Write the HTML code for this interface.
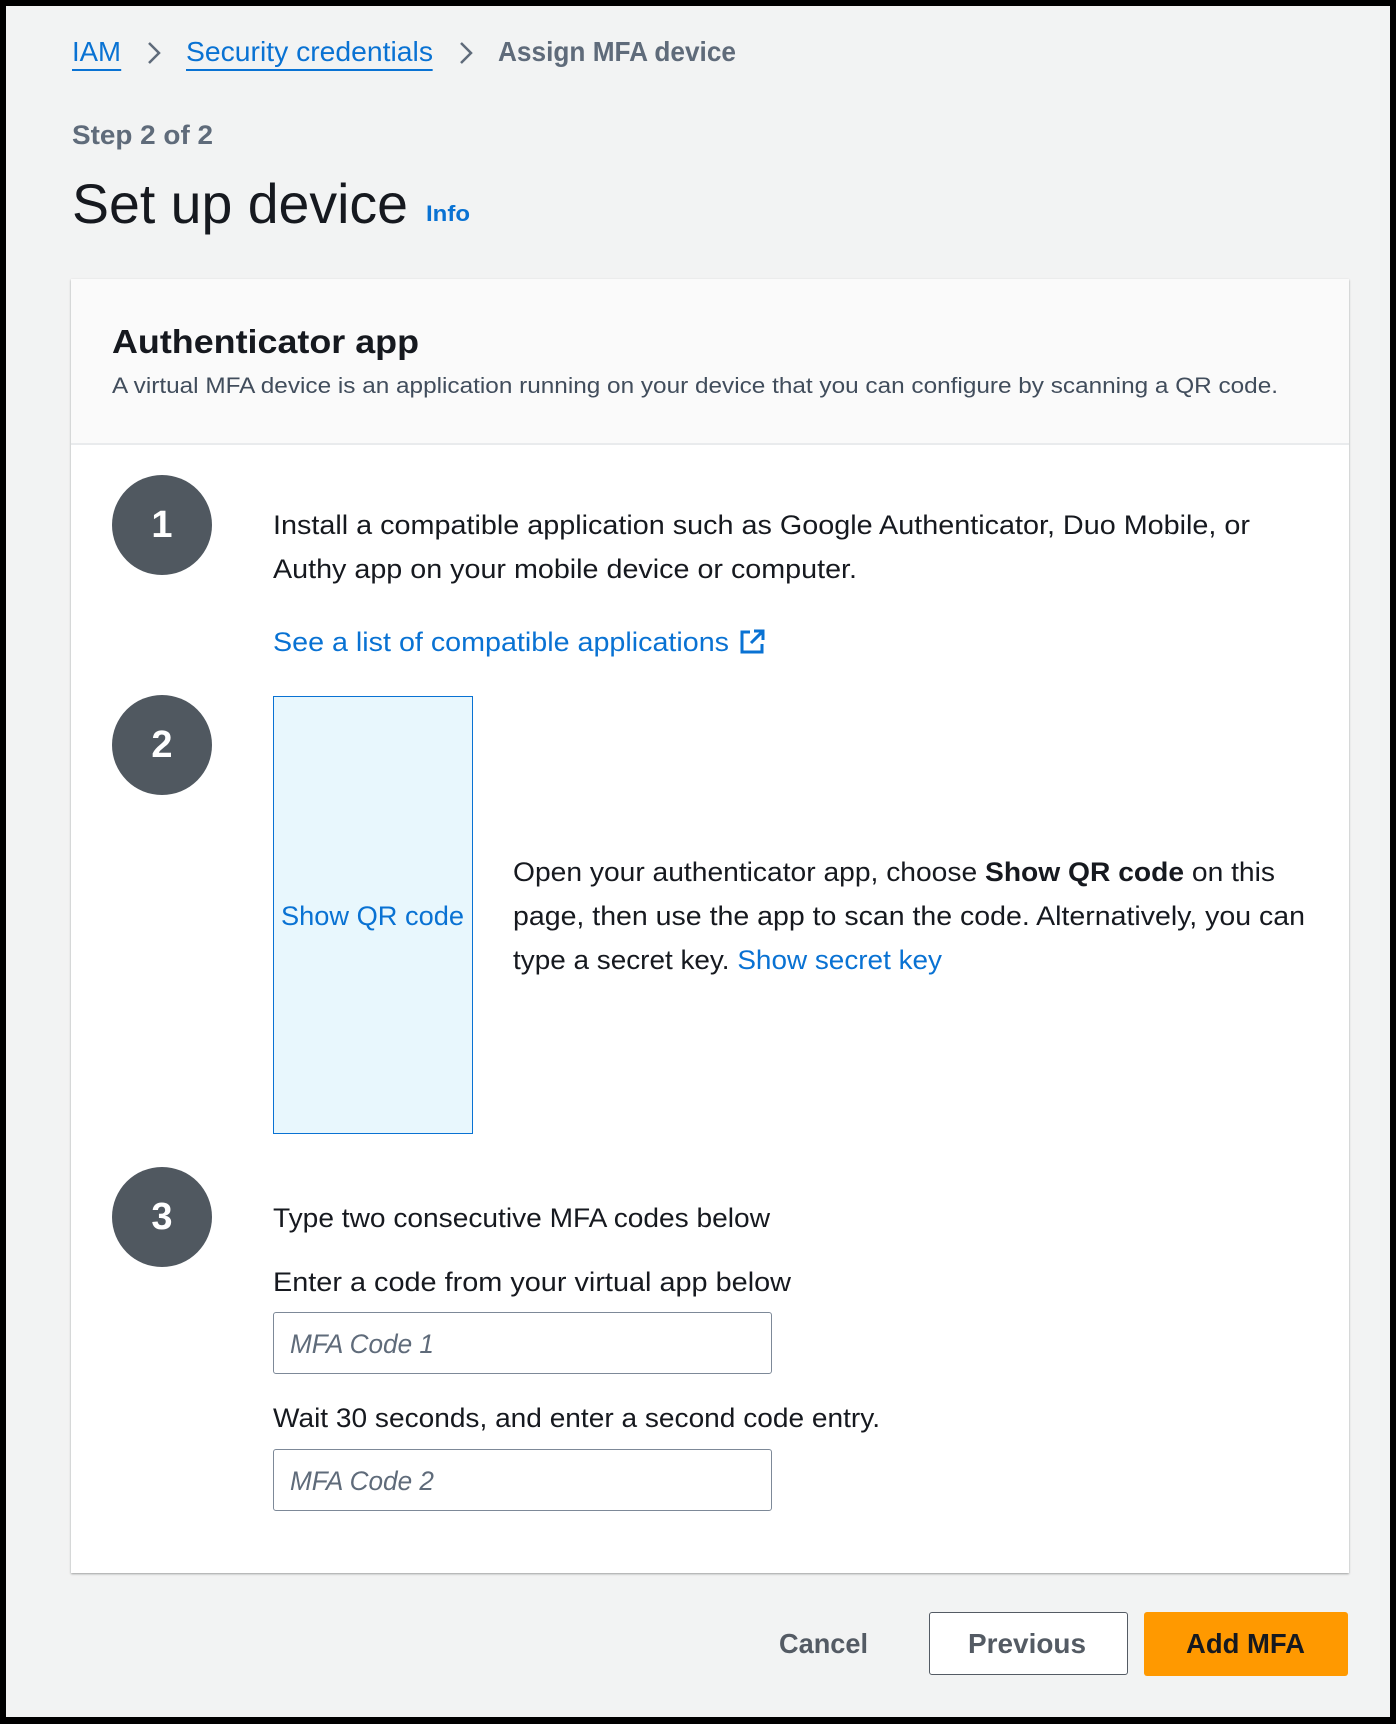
<!DOCTYPE html>
<html><head><meta charset="utf-8"><style>
html,body{margin:0;padding:0}
body{width:1396px;height:1724px;background:#000;position:relative;overflow:hidden;font-family:"Liberation Sans",sans-serif;color:#16191f}
#pg{position:absolute;left:6px;top:6px;width:1384px;height:1711px;background:#f2f3f3}
.t{position:absolute;white-space:nowrap;transform-origin:0 50%;line-height:1}
.a{color:#0972d3}
.card{position:absolute;left:71px;top:279px;width:1278px;height:1293px;background:#fff;box-shadow:0 1px 2px rgba(0,0,0,.35);border-top:1px solid #e9ebed}
.hdr{position:absolute;left:71px;top:279px;width:1278px;height:164px;background:#fafafa;border-bottom:2px solid #e9ebed}
.c{position:absolute;width:100px;height:100px;border-radius:50%;background:#505860;color:#fff;font-weight:bold;font-size:38px;display:flex;align-items:center;justify-content:center}
.in{position:absolute;left:273px;width:497px;height:60px;border:1.5px solid #7d8998;border-radius:3px;background:#fff}
.u{border-bottom:2px solid #0972d3;padding-bottom:2px}
</style></head><body>
<div id="pg"></div>
<div class="t a fit" style="left:72px;top:38px;font-size:28px;--w:49px"><span class="u">IAM</span></div>
<svg style="position:absolute;left:146px;top:40px" width="16" height="26"><path d="M3 3 L13 13 L3 23" stroke="#5f6b7a" stroke-width="2.5" fill="none"/></svg>
<div class="t a fit" style="left:186px;top:38px;font-size:28px;--w:247px"><span class="u">Security credentials</span></div>
<svg style="position:absolute;left:458px;top:40px" width="16" height="26"><path d="M3 3 L13 13 L3 23" stroke="#5f6b7a" stroke-width="2.5" fill="none"/></svg>
<div class="t fit" style="left:498px;top:38px;font-size:28px;color:#5f6b7a;font-weight:bold;--w:238px">Assign MFA device</div>
<div class="t fit" style="left:72px;top:122px;font-size:27px;color:#5f6b7a;font-weight:bold;--w:141px">Step 2 of 2</div>
<div class="t fit" style="left:72px;top:176px;font-size:56px;--w:336px">Set up device</div>
<div class="t a fit" style="left:426px;top:203px;font-size:22px;font-weight:bold;--w:44px">Info</div>
<div class="card"></div>
<div class="hdr"></div>
<div class="t fit" style="left:112px;top:325px;font-size:33px;font-weight:bold;--w:307px">Authenticator app</div>
<div class="t fit" style="left:112px;top:375px;font-size:22px;color:#414d5c;--w:1166px">A virtual MFA device is an application running on your device that you can configure by scanning a QR code.</div>
<div class="c" style="left:112px;top:475px">1</div>
<div class="c" style="left:112px;top:695px">2</div>
<div class="c" style="left:112px;top:1167px">3</div>
<div class="t fit" style="left:273px;top:512px;font-size:27px;--w:977px">Install a compatible application such as Google Authenticator, Duo Mobile, or</div>
<div class="t fit" style="left:273px;top:556px;font-size:27px;--w:584px">Authy app on your mobile device or computer.</div>
<div class="t a fit" style="left:273px;top:629px;font-size:27px;--w:456px">See a list of compatible applications</div>
<svg style="position:absolute;left:738px;top:628px" width="28" height="28" viewBox="0 0 28 28"><path d="M12 4 H4 V24 H24 V16 M16 3 H25 V12 M25 3 L13 15" stroke="#0972d3" stroke-width="3" fill="none"/></svg>
<div style="position:absolute;left:273px;top:696px;width:198px;height:436px;background:#e8f7fd;border:1.5px solid #0972d3"></div>
<div class="t a fit" style="left:281px;top:903px;font-size:27px;--w:183px">Show QR code</div>
<div class="t fit" style="left:513px;top:859px;font-size:27px;--w:762px">Open your authenticator app, choose <b>Show QR code</b> on this</div>
<div class="t fit" style="left:513px;top:903px;font-size:27px;--w:792px">page, then use the app to scan the code. Alternatively, you can</div>
<div class="t fit" style="left:513px;top:947px;font-size:27px;--w:429px">type a secret key. <span class="a">Show secret key</span></div>
<div class="t fit" style="left:273px;top:1205px;font-size:27px;--w:497px">Type two consecutive MFA codes below</div>
<div class="t fit" style="left:273px;top:1269px;font-size:27px;--w:518px">Enter a code from your virtual app below</div>
<div class="in" style="top:1312px"></div>
<div class="t fit" style="left:290px;top:1331px;font-size:27px;font-style:italic;color:#5f6b7a;--w:144px">MFA Code 1</div>
<div class="t fit" style="left:273px;top:1405px;font-size:27px;--w:607px">Wait 30 seconds, and enter a second code entry.</div>
<div class="in" style="top:1449px"></div>
<div class="t fit" style="left:290px;top:1468px;font-size:27px;font-style:italic;color:#5f6b7a;--w:144px">MFA Code 2</div>
<div class="t fit" style="left:779px;top:1630px;font-size:28px;font-weight:bold;color:#545b64;--w:89px">Cancel</div>
<div style="position:absolute;left:929px;top:1612px;width:197px;height:61px;border:1.5px solid #545b64;border-radius:3px;background:#fff"></div>
<div class="t fit" style="left:968px;top:1630px;font-size:28px;font-weight:bold;color:#545b64;--w:118px">Previous</div>
<div style="position:absolute;left:1144px;top:1612px;width:204px;height:64px;border-radius:3px;background:#ff9900"></div>
<div class="t fit" style="left:1186px;top:1630px;font-size:28px;font-weight:bold;color:#16191f;--w:119px">Add MFA</div>
<script>
document.querySelectorAll('.fit').forEach(function(e){
 var w=parseFloat(getComputedStyle(e).getPropertyValue('--w'));
 var r=e.getBoundingClientRect().width;
 if(w&&r)e.style.transform='scaleX('+(w/r)+')';
});
</script>
</body></html>
